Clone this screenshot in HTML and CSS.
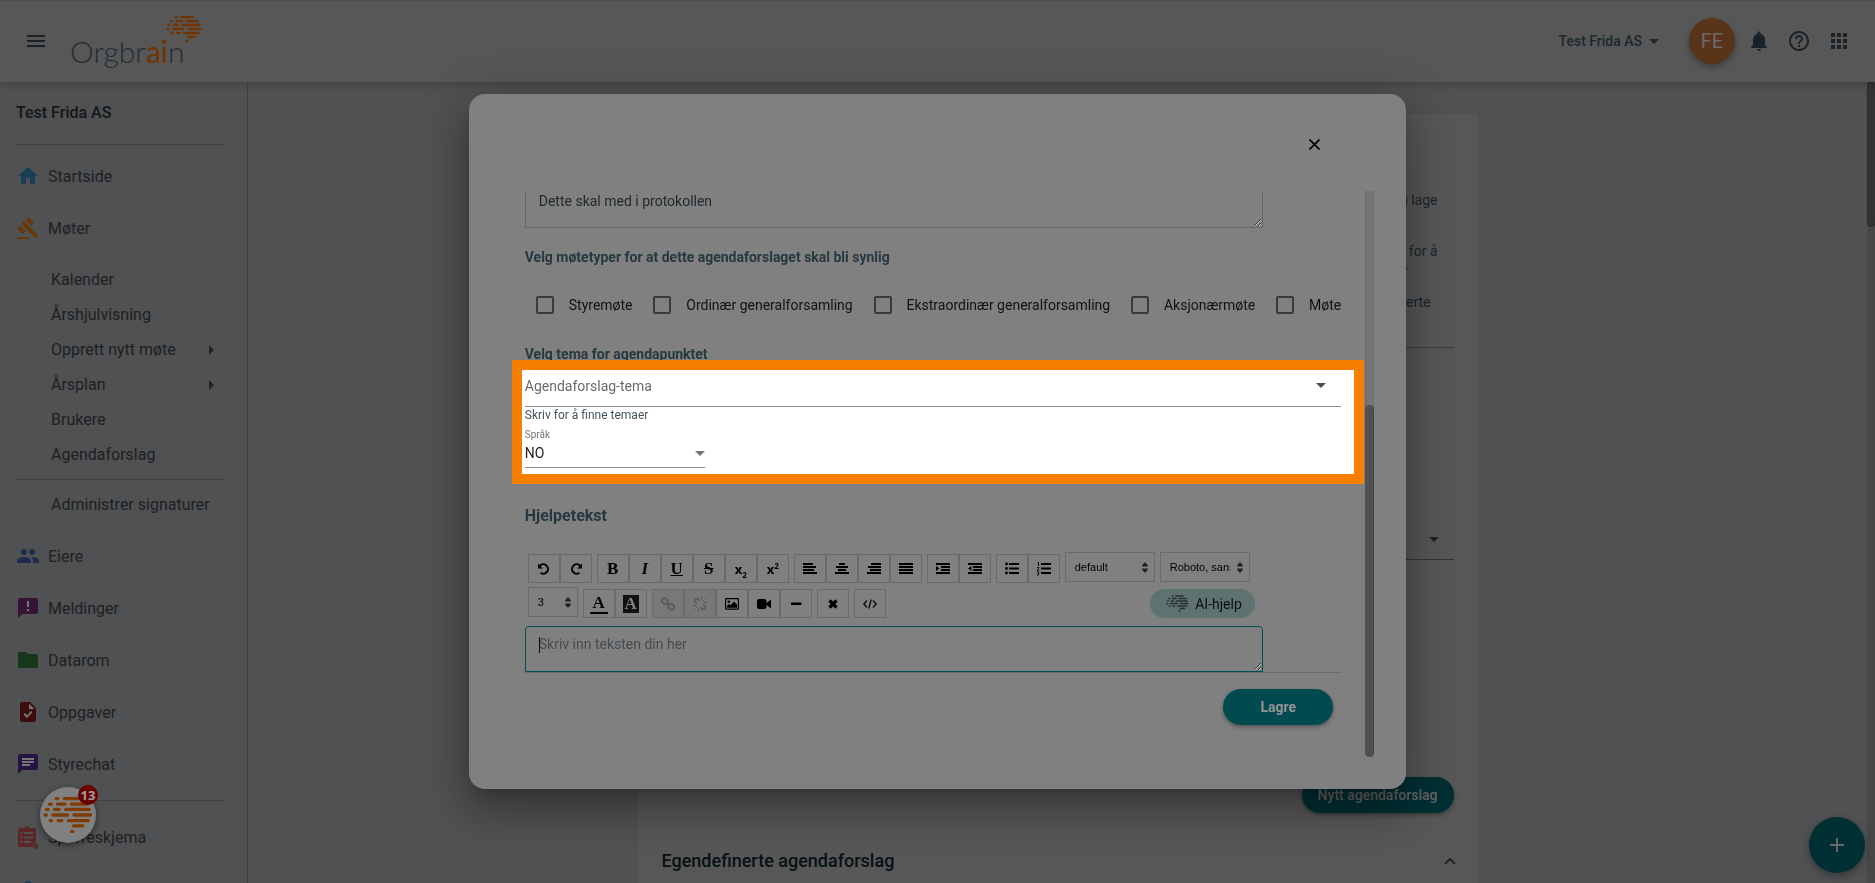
FILE: index.html
```html
<!DOCTYPE html>
<html lang="no">
<head>
<meta charset="utf-8">
<title>Orgbrain – Agendaforslag</title>
<link rel="stylesheet" href="styles.css">
</head>
<body>
<svg class="symbols" aria-hidden="true">
  <symbol id="brain" viewBox="129 679 152 112">
    <g fill="none" stroke="currentColor" stroke-width="10" stroke-linecap="round">
      <path d="M169 685h5M194 685h48M149 702h5M173 702h23M215 702h48M140 718h4M164 718h14M198 718h71M135 735h4M159 735h44M223 735h51M151 752h4M175 752h11M206 752h61M222 768h28M216 785h4"/>
    </g>
  </symbol>
  <symbol id="sort" viewBox="0 0 6 11"><path d="M3 0l2.800 3.200v1.300H.2V3.200zM3 11L.2 7.800V6.500h5.600v1.300z" fill="currentColor"/></symbol>
</svg>

<header class="topbar">
  <button class="icon-btn" aria-label="Meny"><svg viewBox="0 0 24 24"><path d="M3 18h18v-2H3v2zm0-5h18v-2H3v2zm0-7v2h18V6H3z"/></svg></button>
  <a class="logo" href="#"><span class="logo-text">Orgbr<em>ai</em>n</span><svg class="logo-mark"><use href="#brain"/></svg></a>
  <div class="topbar-right">
    <button class="org-btn">Test Frida AS <svg viewBox="0 0 10 5"><path d="M0 0h10L5 5z"/></svg></button>
    <button class="avatar">FE</button>
    <button class="icon-btn" aria-label="Varsler"><svg viewBox="0 0 24 24"><path d="M12 22c1.100 0 2-.9 2-2h-4c0 1.100.89 2 2 2zm6-6v-5c0-3.070-1.640-5.640-4.500-6.320V4c0-.83-.67-1.500-1.500-1.500s-1.500.67-1.500 1.500v.68C7.630 5.360 6 7.920 6 11v5l-2 2v1h16v-1l-2-2z"/></svg></button>
    <button class="icon-btn" aria-label="Hjelp"><svg viewBox="0 0 24 24"><path d="M11 18h2v-2h-2v2zm1-16C6.480 2 2 6.480 2 12s4.480 10 10 10 10-4.480 10-10S17.520 2 12 2zm0 18c-4.410 0-8-3.590-8-8s3.590-8 8-8 8 3.590 8 8-3.590 8-8 8zm0-14c-2.210 0-4 1.790-4 4h2c0-1.100.9-2 2-2s2 .9 2 2c0 2-3 1.750-3 5h2c0-2.250 3-2.500 3-5 0-2.210-1.790-4-4-4z"/></svg></button>
    <button class="icon-btn" aria-label="Apper"><svg viewBox="0 0 24 24"><path d="M4 8h4V4H4v4zm6 12h4v-4h-4v4zm-6 0h4v-4H4v4zm0-6h4v-4H4v4zm6 0h4v-4h-4v4zm6-10v4h4V4h-4zm-6 4h4V4h-4v4zm6 6h4v-4h-4v4zm0 6h4v-4h-4v4z"/></svg></button>
  </div>
</header>

<div class="page">
  <nav class="sidebar">
    <h2 class="side-title">Test Frida AS</h2>
    <hr class="side-rule">
    <a class="nav-item" href="#"><svg class="c-home" viewBox="0 0 24 24"><path d="M10 20v-6h4v6h5v-8h3L12 3 2 12h3v8z"/></svg>Startside</a>
    <a class="nav-item" href="#"><svg class="c-gavel" viewBox="0 0 24 24"><path d="M1 21h12v2H1zM5.245 8.070l2.830-2.827 14.140 14.142-2.828 2.828zM12.317 1l5.657 5.656-2.830 2.830-5.654-5.660zM3.825 9.485l5.657 5.657-2.828 2.828-5.657-5.657z"/></svg>Møter</a>
    <div class="subnav">
      <a href="#">Kalender</a>
      <a href="#">Årshjulvisning</a>
      <a href="#">Opprett nytt møte<svg viewBox="0 0 5 10"><path d="M0 0l5 5-5 5z"/></svg></a>
      <a href="#">Årsplan<svg viewBox="0 0 5 10"><path d="M0 0l5 5-5 5z"/></svg></a>
      <a href="#">Brukere</a>
      <a href="#">Agendaforslag</a>
    </div>
    <hr class="side-rule">
    <div class="subnav subnav-last"><a href="#">Administrer signaturer</a></div>
    <a class="nav-item" href="#"><svg class="c-people" viewBox="0 0 24 24"><path d="M16 11c1.660 0 2.990-1.340 2.990-3S17.660 5 16 5c-1.660 0-3 1.340-3 3s1.340 3 3 3zm-8 0c1.660 0 2.990-1.340 2.990-3S9.660 5 8 5C6.340 5 5 6.340 5 8s1.340 3 3 3zm0 2c-2.330 0-7 1.170-7 3.500V19h14v-2.500c0-2.330-4.670-3.500-7-3.500zm8 0c-.29 0-.62.02-.97.05 1.160.84 1.970 1.970 1.970 3.450V19h6v-2.500c0-2.330-4.670-3.500-7-3.500z"/></svg>Eiere</a>
    <a class="nav-item" href="#"><svg class="c-msg" viewBox="0 0 24 24"><path fill="#777" d="M10 4h4v12h-4z"/><path d="M20 2H4c-1.100 0-1.990.9-1.990 2L2 22l4-4h14c1.100 0 2-.9 2-2V4c0-1.100-.9-2-2-2zm-7 9h-2V5h2v6zm0 4h-2v-2h2v2z"/></svg>Meldinger</a>
    <a class="nav-item" href="#"><svg class="c-data" viewBox="0 0 24 24"><path d="M10 4H4c-1.100 0-1.990.9-1.990 2L2 18c0 1.100.9 2 2 2h16c1.100 0 2-.9 2-2V8c0-1.100-.9-2-2-2h-8l-2-2z"/></svg>Datarom</a>
    <a class="nav-item" href="#"><svg class="c-task" viewBox="0 0 24 24"><path fill="#777" d="M6 10h12v9H6zM12.500 3l6 6h-6z"/><path d="M14 2H6c-1.100 0-1.990.9-1.990 2L4 20c0 1.100.89 2 1.990 2H18c1.100 0 2-.9 2-2V8l-6-6zm-3.060 16L7.400 14.460l1.410-1.410 2.120 2.120 4.240-4.240 1.410 1.410L10.940 18zM13 9V3.500L18.500 9H13z"/></svg>Oppgaver</a>
    <a class="nav-item" href="#"><svg class="c-chat" viewBox="0 0 24 24"><path fill="#777" d="M5 5h14v10H5z"/><path d="M20 2H4c-1.100 0-1.990.9-1.990 2L2 22l4-4h14c1.100 0 2-.9 2-2V4c0-1.100-.9-2-2-2zM6 9h12v2H6V9zm8 5H6v-2h8v2zm4-6H6V6h12v2z"/></svg>Styrechat</a>
    <hr class="side-rule side-rule-low">
    <a class="nav-item" href="#"><svg class="c-form" viewBox="0 0 24 24"><path d="M4 3h4.500a2.600 2.600 0 0 1 5 0H18a2 2 0 0 1 2 2v12.500a3.400 3.400 0 0 0-3.500 4.500H4a2 2 0 0 1-2-2V5a2 2 0 0 1 2-2zm.5 4v2h2V7zm0 4.500v2h2v-2zm0 4.500v2h2v-2zM8 7v2h9V7zm0 4.500v2h9v-2zM8 16v2h7v-2z" fill-rule="evenodd"/><circle cx="19.500" cy="21.200" r="2.600"/><path d="M18.300 21.200l1 1 1.600-1.700" fill="none" stroke="#515254" stroke-width=".8"/></svg>Spørreskjema</a>
    <a class="nav-item" href="#" aria-label="Profil"><svg class="c-more" viewBox="0 0 24 24"><circle cx="12" cy="8" r="4"/></svg></a>
    <button class="bubble" aria-label="Assistent"><svg><use href="#brain"/></svg><span class="badge">13</span></button>
  </nav>

  <main class="main">
    <section class="card">
      <div class="notes">
        <p>du lage</p>
        <p>for å<br><span class="short">r</span></p>
        <p>definerte&nbsp;&nbsp;</p>
      </div>
      <hr class="card-rule">
      <button class="card-select" aria-label="Velg"><svg viewBox="0 0 10 5"><path d="M0 0h10L5 5z"/></svg></button>
      <button class="pill card-action">Nytt agendaforslag</button>
      <div class="card-heading">
        <h2>Egendefinerte agendaforslag</h2>
        <svg viewBox="0 0 12 8"><path d="M1 7l5-5 5 5" fill="none" stroke="currentColor" stroke-width="2"/></svg>
      </div>
    </section>
    <button class="fab" aria-label="Legg til"><svg viewBox="0 0 14 14"><path d="M6 0h2v6h6v2H8v6H6V8H0V6h6z"/></svg></button>
  </main>
  <div class="page-scroll"><div class="page-thumb"></div></div>
</div>

<div class="overlay">
  <form class="dialog" role="dialog">
    <div class="dialog-head"><button type="button" class="close" aria-label="Lukk"><svg viewBox="0 0 10 10"><path d="M.5.5l9 9M9.500.5l-9 9" fill="none" stroke="#000" stroke-width="1.500"/></svg></button></div>
    <div class="dialog-body">
      <div class="content">
        <textarea class="area area-top" aria-label="Protokolltekst">Dette skal med i protokollen</textarea>
        <h4 class="label">Velg møtetyper for at dette agendaforslaget skal bli synlig</h4>
        <div class="checks">
          <label><input type="checkbox">Styremøte</label>
          <label><input type="checkbox">Ordinær generalforsamling</label>
          <label><input type="checkbox">Ekstraordinær generalforsamling</label>
          <label><input type="checkbox">Aksjonærmøte</label>
          <label><input type="checkbox">Møte</label>
        </div>
        <h4 class="label label-theme">Velg tema for agendapunktet</h4>
        <section class="highlight">
          <div class="field theme"><input id="tema" type="text" placeholder="Agendaforslag-tema" aria-describedby="hint" aria-label="Agendaforslag-tema"><svg viewBox="0 0 10 5"><path d="M0 0h10L5 5z"/></svg></div>
          <div class="hint" id="hint">Skriv for å finne temaer</div>
          <label class="mini" for="lang">Språk</label>
          <div class="field lang"><select id="lang"><option>NO</option></select><svg viewBox="0 0 10 5"><path d="M0 0h10L5 5z"/></svg></div>
        </section>
        <h3 class="help-title">Hjelpetekst</h3>

        <div class="toolbar">
          <div class="tool-row">
            <div class="tools">
              <button type="button" aria-label="Angre"><svg viewBox="0 0 14 14"><path d="M2.800 3.800A4.700 4.700 0 1 1 3.500 10.800" fill="none" stroke="currentColor" stroke-width="2"/><path d="M1 1.500v5h5z"/></svg></button>
              <button type="button" aria-label="Gjør om"><svg viewBox="0 0 14 14"><path d="M11.200 3.800A4.700 4.700 0 1 0 10.500 10.800" fill="none" stroke="currentColor" stroke-width="2"/><path d="M13 1.500v5H8z"/></svg></button>
            </div>
            <div class="tools serif">
              <button type="button"><b>B</b></button>
              <button type="button"><i>I</i></button>
              <button type="button"><u>U</u></button>
              <button type="button"><s>S</s></button>
              <button type="button" class="script">x<sub>2</sub></button>
              <button type="button" class="script">x<sup>2</sup></button>
            </div>
            <div class="tools">
              <button type="button" aria-label="Venstrestill"><svg viewBox="0 0 14 14"><path d="M0 1h10v2H0zM0 4h13v2H0zM0 7h11v2H0zM0 10h14v2H0z"/></svg></button>
              <button type="button" aria-label="Midtstill"><svg viewBox="0 0 14 14"><path d="M4 1h6v2H4zM1 4h12v2H1zM3 7h8v2H3zM0 10h14v2H0z"/></svg></button>
              <button type="button" aria-label="Høyrestill"><svg viewBox="0 0 14 14"><path d="M4 1h10v2H4zM1 4h13v2H1zM3 7h11v2H3zM0 10h14v2H0z"/></svg></button>
              <button type="button" aria-label="Blokkjuster"><svg viewBox="0 0 14 14"><path d="M0 1h14v2H0zM0 4h14v2H0zM0 7h14v2H0zM0 10h14v2H0z"/></svg></button>
            </div>
            <div class="tools">
              <button type="button" aria-label="Øk innrykk"><svg viewBox="0 0 14 14"><path d="M0 1h14v2H0zM5 4h9v2H5zM5 7h9v2H5zM0 10h14v2H0zM0 4l3.500 2.500L0 9z"/></svg></button>
              <button type="button" aria-label="Reduser innrykk"><svg viewBox="0 0 14 14"><path d="M0 1h14v2H0zM5 4h9v2H5zM5 7h9v2H5zM0 10h14v2H0zM3.500 4L0 6.500 3.500 9z"/></svg></button>
            </div>
            <div class="tools">
              <button type="button" aria-label="Punktliste"><svg viewBox="0 0 14 14"><path d="M4 1h10v2H4zM4 5.500h10v2H4zM4 10h10v2H4z"/><circle cx="1.500" cy="2" r="1.400"/><circle cx="1.500" cy="6.500" r="1.400"/><circle cx="1.500" cy="11" r="1.400"/></svg></button>
              <button type="button" aria-label="Nummerliste"><svg viewBox="0 0 14 14"><path d="M4 1h10v2H4zM4 5.500h10v2H4zM4 10h10v2H4z"/><path d="M.5 1l1-.5v3.500M0 5.500h2l-1.800 3H2.200M0 10h2l-1 1.300q1.200.2.800 1.300-.8.800-1.800.3" fill="none" stroke="currentColor" stroke-width=".9"/></svg></button>
            </div>
            <div class="tool-select"><select aria-label="Format"><option>default</option></select><svg><use href="#sort"/></svg></div>
            <div class="tool-select"><select aria-label="Skrift"><option>Roboto, sans-serif</option></select><svg><use href="#sort"/></svg></div>
          </div>
          <div class="tool-row">
            <div class="tool-select size"><select aria-label="Størrelse"><option>3</option></select><svg><use href="#sort"/></svg></div>
            <div class="tools serif">
              <button type="button"><b class="ink">A</b></button>
              <button type="button"><b class="fillbg">A</b></button>
            </div>
            <div class="tools">
              <button type="button" disabled aria-label="Lenke"><svg viewBox="0 0 14 14"><g fill="none" stroke="currentColor" stroke-width="1.700"><rect x="1.500" y="1.200" width="5" height="6" rx="2.400" transform="rotate(-45 4 4.200)"/><rect x="7.700" y="6.800" width="5" height="6" rx="2.400" transform="rotate(-45 10.200 9.800)"/><path d="M5.500 5.500l3 3"/></g></svg></button>
              <button type="button" disabled aria-label="Fjern lenke"><svg viewBox="0 0 14 14"><g fill="none" stroke="currentColor" stroke-width="1.600"><path d="M6.500 3.800L5 2.300Q3.500 1 2.200 2.300T2.200 5L4 6.800M7.500 10.200L9 11.700q1.500 1.300 2.800 0t0-2.700L10 7.200"/><path d="M8.500 0v2.500M10 4l2-2M11 5.500h2.500M5.500 14v-2.500M4 10l-2 2M3 8.500H.5" stroke-width="1"/></g></svg></button>
              <button type="button" aria-label="Bilde"><svg viewBox="0 0 14 14"><rect x=".6" y="1.600" width="12.800" height="10.500" rx=".5" fill="none" stroke="currentColor" stroke-width="1.200"/><circle cx="3.800" cy="4.700" r="1.300"/><path d="M2 10.700V9l2.200-2 1.300 1.200L9 4.500l3 3v3.200z"/></svg></button>
              <button type="button" aria-label="Video"><svg viewBox="0 0 14 14"><rect x="0" y="2" width="9.500" height="10" rx="2.200"/><path d="M9 6.500l5-4v9l-5-4z"/></svg></button>
              <button type="button" aria-label="Linje"><svg viewBox="0 0 14 14"><rect x="2" y="5.400" width="10.500" height="2.600" rx=".6"/></svg></button>
            </div>
            <div class="tools"><button type="button" aria-label="Fjern format"><svg viewBox="0 0 14 14"><path d="M3.500 3.500l7 7M10.500 3.500l-7 7" stroke="currentColor" stroke-width="3.200"/></svg></button></div>
            <div class="tools"><button type="button" aria-label="Kildekode"><svg viewBox="0 0 14 14"><path d="M4 3.500L.8 7 4 10.500M10 3.500L13.200 7 10 10.500M8.200 2.500l-2.400 9" fill="none" stroke="currentColor" stroke-width="1.200"/></svg></button></div>
            <button type="button" class="ai"><svg><use href="#brain"/></svg>AI-hjelp</button>
          </div>
        </div>
        <div class="editor">
          <textarea class="area area-edit" placeholder="Skriv inn teksten din her" aria-label="Hjelpetekst"></textarea>
          <span class="caret"></span>
        </div>
        <div class="actions"><button type="button" class="pill save">Lagre</button></div>
      </div>
      <div class="scroll"><div class="thumb"></div></div>
    </div>
  </form>
</div>
</body>
</html>
```
FILE: styles.css
```css
* { box-sizing: border-box; }
html, body { height: 100%; }
body {
  margin: 0;
  overflow: hidden;
  display: flex;
  flex-direction: column;
  background: #4f5153;
  color: #1e2022;
  font-family: Roboto, "Liberation Sans", sans-serif;
  font-size: 14px;
}
button, input, select, textarea { font: inherit; color: inherit; margin: 0; padding: 0; border: 0; background: none; outline: 0; }
select { appearance: none; }
a { color: inherit; text-decoration: none; }
h2, h3, h4, p { margin: 0; }
hr { border: 0; margin: 0; height: 1px; }
svg { display: block; fill: currentColor; flex: none; }
.symbols { position: absolute; width: 0; height: 0; }

/* Top bar */
.topbar {
  position: relative;
  z-index: 1;
  flex: none;
  height: 82px;
  padding: 0 24px 1px;
  display: flex;
  align-items: center;
  background: #575757;
  border-top: 1px solid #4e4e4e;
  box-shadow: 0 2px 8px rgba(0, 0, 0, .22);
  color: #1a2227;
}
.icon-btn svg { width: 24px; height: 24px; }
.logo { position: relative; margin-left: 22px; padding-top: 20px; color: #222e34; }
.logo-text { font: 300 30px/40px Lato, "Open Sans", sans-serif; }
.logo-text em { font-style: normal; font-weight: 400; color: #6f3500; }
.logo-mark { position: absolute; left: 96px; top: 4px; width: 36px; height: 28px; color: #6f3500; }
.topbar-right { margin-left: auto; display: flex; align-items: center; gap: 16px; }
.org-btn { display: flex; align-items: center; gap: 7px; margin-right: 14px; font-weight: 500; color: #1b292f; }
.org-btn svg { width: 10px; height: 5px; }
.avatar {
  width: 46px;
  height: 46px;
  margin-right: -4px;
  border-radius: 50%;
  background: #59341a;
  color: #6b6b6b;
  font-size: 20px;
  box-shadow: 0 3px 6px rgba(0, 0, 0, .3);
}

/* Page frame */
.page { flex: 1; min-height: 0; display: flex; }
.sidebar {
  position: relative;
  flex: none;
  width: 248px;
  padding: 17px 23px 0 16px;
  border-right: 1px solid #3c3e40;
  font-size: 16px;
}
.side-title { font-size: 16px; font-weight: 500; line-height: 28px; color: #141617; }
.side-rule { background: #3f4143; margin: 17px 0 5px; }
.nav-item { display: flex; align-items: center; gap: 8px; height: 52px; }
.nav-item svg { width: 24px; height: 24px; }
.subnav { padding: 8px 14px 0 35px; }
.subnav a { display: flex; align-items: center; justify-content: space-between; height: 35px; white-space: nowrap; }
.subnav svg { width: 5px; height: 10px; margin-right: -4px; }
.subnav + .side-rule { margin: 7px 0 0; }
.subnav-last { padding-top: 7px; padding-bottom: 8px; }
.side-rule-low { margin: 10px 0; }
.c-home { color: #183f55; }
.c-gavel { color: #673806; }
.c-people { color: #1f2b4d; }
.c-msg { color: #351437; }
.c-data { color: #17371a; }
.c-task { color: #3c0c0e; }
.c-chat { color: #241440; }
.c-form { color: #5c2526; }
.c-more { color: #1f4050; }
.bubble {
  position: absolute;
  left: 40px;
  top: 705px;
  width: 56px;
  height: 56px;
  border-radius: 50%;
  background: #808080;
  color: #803c00;
  box-shadow: 0 2px 6px rgba(0, 0, 0, .5);
}
.bubble svg { width: 50px; height: 38px; margin: 0 auto; }
.badge {
  position: absolute;
  right: -2px;
  top: -2px;
  width: 20px;
  height: 20px;
  border-radius: 50%;
  background: #6a0000;
  color: #a0a0a0;
  font: bold 13px/20px "Open Sans", sans-serif;
}

/* Content behind the dialog */
.main { position: relative; flex: 1; padding-top: 32px; }
.card { max-width: 840px; min-height: 100%; margin: 0 auto; padding: 76px 24px 0; border-radius: 4px 4px 0 0; background: #575757; }
.notes { display: grid; gap: 11px; padding-right: 16px; text-align: right; line-height: 20px; color: #18262c; }
.notes p { min-height: 40px; }
.short { padding-right: 30px; }
.card-rule { margin-top: 15px; background: #3d3d3d; }
.card-select { display: flex; width: 100%; height: 40px; margin-top: 172px; padding-right: 15px; align-items: center; justify-content: flex-end; border-bottom: 1px solid #333; }
.card-select svg { width: 10px; height: 5px; }
.pill { height: 36px; border-radius: 18px; font-weight: 500; text-align: center; box-shadow: 0 2px 4px rgba(0, 0, 0, .35); }
.card-action { display: block; margin: 217px 0 0 auto; padding: 0 16px; background: #002f34; color: #666; }
.card-heading { display: flex; justify-content: space-between; align-items: center; margin: 36px -2px 0 0; }
.card-heading h2 { font-size: 18px; font-weight: 500; line-height: 24px; color: #061114; }
.card-heading svg { width: 12px; height: 8px; color: #252525; }
.fab {
  position: absolute;
  right: 2px;
  bottom: 10px;
  width: 56px;
  height: 56px;
  display: grid;
  place-items: center;
  border-radius: 50%;
  background: #002f34;
  color: #666;
  box-shadow: 0 3px 8px rgba(0, 0, 0, .35);
}
.fab svg { width: 14px; height: 14px; }
.page-scroll { width: 8px; background: #474848; }
.page-thumb { height: 145px; border: 1px solid #252b31; border-right: 0; border-radius: 4px; background: #333; }

/* Dialog */
.overlay { position: fixed; inset: 0; z-index: 2; display: flex; align-items: center; justify-content: center; }
.dialog {
  width: 50%;
  padding: 0 32px 32px;
  border-radius: 16px;
  background: #808080;
  box-shadow: 0 11px 15px -7px rgba(0, 0, 0, .2), 0 24px 38px 3px rgba(0, 0, 0, .18), 0 9px 46px 8px rgba(0, 0, 0, .18);
}
.dialog-head { display: flex; justify-content: flex-end; height: 97px; padding: 38px 48px 0 0; }
.close { width: 24px; height: 24px; display: grid; place-items: center; }
.close svg { width: 11px; height: 11px; }
.dialog-body { display: flex; }
.content { flex: 1; min-width: 0; padding: 0 24px 32px; }
.scroll { flex: none; width: 9px; padding-top: 214px; display: flex; background: linear-gradient(90deg, #6c6c6c, #777 40%, #727272); border-radius: 0 0 5px 5px; }
.thumb { flex: 1; border-radius: 5px; background: #505050; border-right: 1px solid #364450; }

.area { display: block; width: 738px; padding: 0 13px; border: 1px solid #666; font-size: 14px; line-height: 20px; color: #1e272c; overflow: hidden; resize: both; }
.area-top { height: 37px; border-top: 0; }
.label { margin-top: 17px; font-size: 14px; font-weight: 700; line-height: 24px; color: #263840; }
.checks { display: flex; justify-content: space-between; height: 40px; margin-top: 16px; padding-left: 11px; align-items: center; white-space: nowrap; color: #111; }
.checks label { display: flex; align-items: center; gap: 15px; }
.checks input { appearance: none; width: 18px; height: 18px; border: 2px solid #3a3a3a; border-radius: 2px; }
.highlight {
  position: relative;
  margin: -6px -23px 0 -13px;
  padding: 0 13px 6px 3px;
  border: 10px solid #f77f00;
  background: #fff;
}
.field { display: flex; align-items: center; border-bottom: 1px solid #8c8c8c; }
.field input, .field select { flex: 1; min-width: 0; height: 22px; }
.field svg { width: 10px; height: 5px; }
.theme { height: 37px; padding: 0 15px 5px 0; color: #45525a; }
.theme input::placeholder { color: #6b6b6b; opacity: 1; }
.hint { font-size: 12px; line-height: 16px; color: #45545c; }
.mini { display: block; margin-top: 5px; font-size: 10px; line-height: 14px; color: #757575; }
.lang { width: 180px; padding-bottom: 3px; color: #757575; }
.lang select { color: #222; }
.help-title { margin-top: 20px; font-size: 16px; font-weight: 700; line-height: 24px; color: #263840; }

/* Editor toolbar */
.toolbar { display: grid; gap: 4px; margin-top: 24px; padding-left: 3px; }
.tool-row { display: flex; gap: 5px; align-items: flex-start; height: 31px; max-width: 727px; }
.tools { display: flex; margin-top: 2px; }
.tools button { display: grid; place-items: center; width: 32px; height: 29px; border: 1px solid #6a6a6a; color: #000; }
.tools button svg { width: 14px; height: 14px; }
.tools button:disabled { background: #787878; color: #585858; }
.serif button { font: 17px/20px "Liberation Serif", serif; }
.serif i, .serif u, .serif s { font-weight: 700; }
.serif .script { display: block; font: bold 13px/24px "Open Sans", sans-serif; }
.script sub, .script sup { font-size: 8px; line-height: 0; }
.ink { padding: 0 3px; border-bottom: 2px solid #000; line-height: 18px; }
.fillbg { width: 16px; height: 18px; background: #111; color: #808080; line-height: 18px; }
.tool-select { display: flex; align-items: center; gap: 7px; width: 90px; height: 30px; padding: 0 6px 0 9px; border: 1px solid #6a6a6a; font: 11px "Liberation Sans", Arial, sans-serif; color: #000; }
.tool-select select { flex: 1; min-width: 0; }
.tool-select svg { width: 6px; height: 11px; color: #222; }
.size { width: 50px; }
.ai { display: flex; align-items: center; gap: 6px; height: 29px; margin: 2px 0 0 auto; padding: 0 13px 0 16px; border-radius: 15px; background: #5d7271; color: #0c0f10; }
.ai svg { width: 23px; height: 17px; color: #26302f; }
.editor { position: relative; margin-top: 8px; border-bottom: 1px solid #6c6c6c; }
.area-edit { height: 46px; padding: 7px 13px; border-color: #004d54; border-radius: 4px 4px 0 0; }
.area-edit::placeholder { color: #454b4f; opacity: 1; }
.caret { position: absolute; left: 14px; top: 11px; width: 1px; height: 16px; background: #111; }
.actions { display: flex; justify-content: flex-end; margin-top: 16px; padding-right: 8px; }
.save { width: 110px; background: #004a50; color: #959595; font-weight: 700; }
```
